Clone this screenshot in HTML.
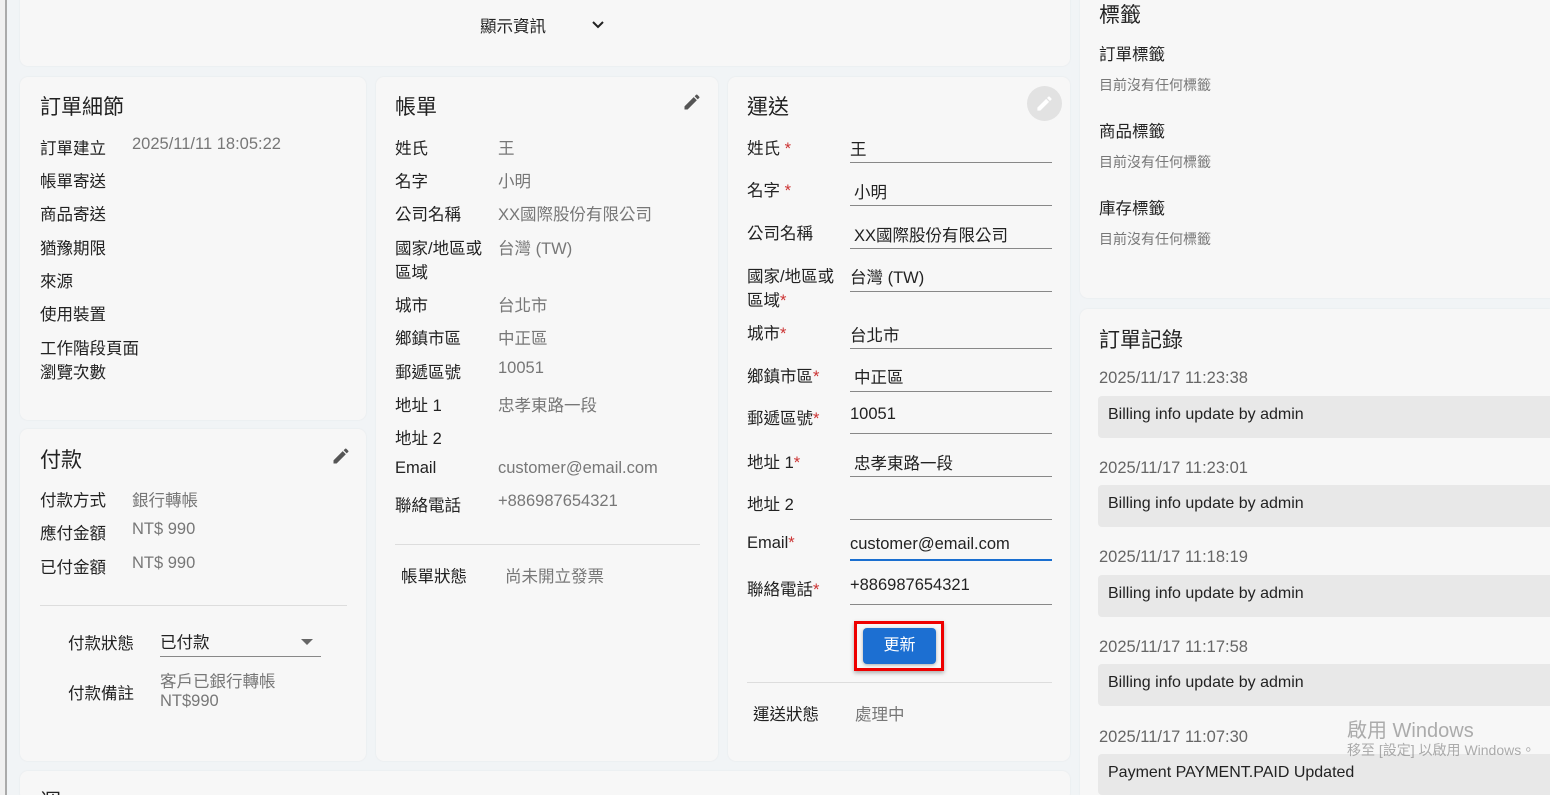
<!DOCTYPE html>
<html style="overflow:hidden;height:795px;width:1550px"><head><meta charset="utf-8"><style>
*{box-sizing:border-box;margin:0;padding:0}
body{width:1550px;height:795px;overflow:hidden;background:#f1f4f6;font-family:"Liberation Sans","Noto Sans CJK TC",sans-serif;color:#222;position:relative;font-size:16.5px}
.c{position:absolute;background:#f7f7f7;border-radius:8px;box-shadow:0 0 2px rgba(0,0,0,.06)}
.t{position:absolute;white-space:nowrap;margin-top:-2px}
.h{font-size:21px;color:#222;margin-top:-4px}
.g{color:#777}
.s{color:#777;font-size:14px}
.ln{position:absolute;height:1px;background:#888}
.hr{position:absolute;height:1px;background:#ddd}
.r{color:#c33}
.log{position:absolute;left:1098px;width:452px;height:42px;background:#e8e8e8;border-radius:4px 0 0 4px;padding:10px 10px;font-size:16px;color:#222}
.d{position:absolute;left:1099px;color:#666;font-size:16.5px}
</style></head><body>
<div style="position:absolute;left:5px;top:0;width:2px;height:795px;background:#aaa"></div>
<div style="position:absolute;left:0;top:0;width:5px;height:795px;background:#f0f0f0"></div>

<div class="c" style="left:20px;top:-8px;width:1050px;height:74px"></div>
<div class="t" style="left:480px;top:15px">顯示資訊</div>
<svg style="position:absolute;left:591px;top:19px" width="14" height="12" viewBox="0 0 14 12"><path d="M2 3l5 5 5-5" stroke="#222" stroke-width="2" fill="none"/></svg>

<div class="c" style="left:20px;top:77px;width:346px;height:343px"></div>
<div class="t h" style="left:40px;top:95px">訂單細節</div>
<div class="t" style="left:40px;top:137px">訂單建立</div><div class="t g" style="left:132px;top:137px">2025/11/11 18:05:22</div>
<div class="t" style="left:40px;top:170px">帳單寄送</div>
<div class="t" style="left:40px;top:203px">商品寄送</div>
<div class="t" style="left:40px;top:237px">猶豫期限</div>
<div class="t" style="left:40px;top:270px">來源</div>
<div class="t" style="left:40px;top:303px">使用裝置</div>
<div class="t" style="left:40px;top:337px">工作階段頁面</div>
<div class="t" style="left:40px;top:361px">瀏覽次數</div>

<div class="c" style="left:20px;top:429px;width:346px;height:332px"></div>
<div class="t h" style="left:40px;top:448px">付款</div>
<svg style="position:absolute;left:331px;top:446px" width="20" height="20" viewBox="0 0 24 24"><path d="M3 17.25V21h3.75L17.81 9.94l-3.75-3.75L3 17.25zM20.71 7.04a1 1 0 000-1.41l-2.34-2.34a1 1 0 00-1.41 0l-1.83 1.83 3.75 3.75 1.83-1.83z" fill="#555"/></svg>
<div class="t" style="left:40px;top:489px">付款方式</div><div class="t g" style="left:132px;top:489px">銀行轉帳</div>
<div class="t" style="left:40px;top:522px">應付金額</div><div class="t g" style="left:132px;top:522px">NT$ 990</div>
<div class="t" style="left:40px;top:556px">已付金額</div><div class="t g" style="left:132px;top:556px">NT$ 990</div>
<div class="hr" style="left:40px;top:605px;width:307px"></div>
<div class="t" style="left:68px;top:632px">付款狀態</div><div class="t" style="left:160px;top:631px">已付款</div>
<svg style="position:absolute;left:300px;top:638px" width="14" height="8"><path d="M1 1h12L7 7z" fill="#666"/></svg>
<div class="ln" style="left:160px;top:656px;width:161px"></div>
<div class="t" style="left:68px;top:682px">付款備註</div>
<div class="t g" style="left:160px;top:670px">客戶已銀行轉帳</div><div class="t g" style="left:160px;top:694px">NT$990</div>

<div class="c" style="left:376px;top:77px;width:342px;height:684px"></div>
<div class="t h" style="left:395px;top:95px">帳單</div>
<svg style="position:absolute;left:682px;top:92px" width="20" height="20" viewBox="0 0 24 24"><path d="M3 17.25V21h3.75L17.81 9.94l-3.75-3.75L3 17.25zM20.71 7.04a1 1 0 000-1.41l-2.34-2.34a1 1 0 00-1.41 0l-1.83 1.83 3.75 3.75 1.83-1.83z" fill="#555"/></svg>
<div class="t" style="left:395px;top:137px">姓氏</div><div class="t g" style="left:498px;top:137px">王</div>
<div class="t" style="left:395px;top:170px">名字</div><div class="t g" style="left:498px;top:170px">小明</div>
<div class="t" style="left:395px;top:203px">公司名稱</div><div class="t g" style="left:498px;top:203px">XX國際股份有限公司</div>
<div class="t" style="left:395px;top:237px">國家/地區或</div><div class="t g" style="left:498px;top:237px">台灣 (TW)</div>
<div class="t" style="left:395px;top:261px">區域</div>
<div class="t" style="left:395px;top:294px">城市</div><div class="t g" style="left:498px;top:294px">台北市</div>
<div class="t" style="left:395px;top:327px">鄉鎮市區</div><div class="t g" style="left:498px;top:327px">中正區</div>
<div class="t" style="left:395px;top:361px">郵遞區號</div><div class="t g" style="left:498px;top:361px">10051</div>
<div class="t" style="left:395px;top:394px">地址 1</div><div class="t g" style="left:498px;top:394px">忠孝東路一段</div>
<div class="t" style="left:395px;top:427px">地址 2</div>
<div class="t" style="left:395px;top:461px">Email</div><div class="t g" style="left:498px;top:461px">customer@email.com</div>
<div class="t" style="left:395px;top:494px">聯絡電話</div><div class="t g" style="left:498px;top:494px">+886987654321</div>
<div class="hr" style="left:395px;top:544px;width:305px"></div>
<div class="t" style="left:401px;top:565px">帳單狀態</div><div class="t g" style="left:505px;top:565px">尚未開立發票</div>

<div class="c" style="left:728px;top:77px;width:342px;height:684px"></div>
<div class="t h" style="left:747px;top:95px">運送</div>
<div style="position:absolute;left:1027px;top:86px;width:35px;height:35px;border-radius:50%;background:#e2e2e2"></div>
<svg style="position:absolute;left:1035px;top:94px" width="19" height="19" viewBox="0 0 24 24"><path d="M3 17.25V21h3.75L17.81 9.94l-3.75-3.75L3 17.25zM20.71 7.04a1 1 0 000-1.41l-2.34-2.34a1 1 0 00-1.41 0l-1.83 1.83 3.75 3.75 1.83-1.83z" fill="#fff"/></svg>
<div class="t" style="left:747px;top:137px">姓氏 <span class="r">*</span></div><div class="t" style="left:850px;top:138px">王</div><div class="ln" style="left:850px;top:162px;width:202px"></div>
<div class="t" style="left:747px;top:179px">名字 <span class="r">*</span></div><div class="t" style="left:854px;top:181px">小明</div><div class="ln" style="left:850px;top:205px;width:202px"></div>
<div class="t" style="left:747px;top:222px">公司名稱</div><div class="t" style="left:854px;top:224px">XX國際股份有限公司</div><div class="ln" style="left:850px;top:248px;width:202px"></div>
<div class="t" style="left:747px;top:265px">國家/地區或</div><div class="t" style="left:747px;top:289px">區域<span class="r">*</span></div><div class="t" style="left:850px;top:266px">台灣 (TW)</div><div class="ln" style="left:850px;top:291px;width:202px"></div>
<div class="t" style="left:747px;top:322px">城市<span class="r">*</span></div><div class="t" style="left:850px;top:324px">台北市</div><div class="ln" style="left:850px;top:348px;width:202px"></div>
<div class="t" style="left:747px;top:365px">鄉鎮市區<span class="r">*</span></div><div class="t" style="left:854px;top:366px">中正區</div><div class="ln" style="left:850px;top:391px;width:202px"></div>
<div class="t" style="left:747px;top:407px">郵遞區號<span class="r">*</span></div><div class="t" style="left:850px;top:407px">10051</div><div class="ln" style="left:850px;top:433px;width:202px"></div>
<div class="t" style="left:747px;top:451px">地址 1<span class="r">*</span></div><div class="t" style="left:854px;top:452px">忠孝東路一段</div><div class="ln" style="left:850px;top:476px;width:202px"></div>
<div class="t" style="left:747px;top:493px">地址 2</div><div class="ln" style="left:850px;top:519px;width:202px"></div>
<div class="t" style="left:747px;top:536px">Email<span class="r">*</span></div><div class="t" style="left:850px;top:537px">customer@email.com</div><div style="position:absolute;left:850px;top:559px;width:202px;height:2px;background:#1a6fd0"></div>
<div class="t" style="left:747px;top:578px">聯絡電話<span class="r">*</span></div><div class="t" style="left:850px;top:578px">+886987654321</div><div class="ln" style="left:850px;top:604px;width:202px"></div>
<div style="position:absolute;left:854px;top:621px;width:90px;height:50px;border:3px solid #e00;box-shadow:0 2px 4px rgba(0,0,0,.3)"></div>
<div style="position:absolute;left:863px;top:628px;width:73px;height:36px;background:#1c6fd2;border-radius:4px;color:#fff;text-align:center;line-height:36px;font-size:16px;box-shadow:0 1px 3px rgba(0,0,0,.3)">更新</div>
<div class="hr" style="left:747px;top:682px;width:305px"></div>
<div class="t" style="left:753px;top:703px">運送狀態</div><div class="t g" style="left:855px;top:703px">處理中</div>

<div class="c" style="left:20px;top:771px;width:1050px;height:30px"></div>
<div class="t h" style="left:40px;top:790px">運</div>

<div class="c" style="left:1080px;top:-8px;width:480px;height:306px"></div>
<div class="t h" style="left:1099px;top:3px">標籤</div>
<div class="t" style="left:1099px;top:43px">訂單標籤</div><div class="t s" style="left:1099px;top:77px">目前沒有任何標籤</div>
<div class="t" style="left:1099px;top:120px">商品標籤</div><div class="t s" style="left:1099px;top:154px">目前沒有任何標籤</div>
<div class="t" style="left:1099px;top:197px">庫存標籤</div><div class="t s" style="left:1099px;top:231px">目前沒有任何標籤</div>

<div class="c" style="left:1080px;top:309px;width:470px;height:486px;border-radius:8px 0 0 0"></div>
<div class="t h" style="left:1099px;top:328px">訂單記錄</div>
<div class="d" style="top:369px">2025/11/17 11:23:38</div><div class="log" style="top:396px">Billing info update by admin</div>
<div class="d" style="top:459px">2025/11/17 11:23:01</div><div class="log" style="top:485px">Billing info update by admin</div>
<div class="d" style="top:548px">2025/11/17 11:18:19</div><div class="log" style="top:575px">Billing info update by admin</div>
<div class="d" style="top:638px">2025/11/17 11:17:58</div><div class="log" style="top:664px">Billing info update by admin</div>
<div class="d" style="top:728px">2025/11/17 11:07:30</div><div class="log" style="top:754px;height:41px">Payment PAYMENT.PAID Updated</div>
<div class="t" style="left:1347px;top:716px;font-size:20px;color:rgba(120,120,120,.6)">啟用 Windows</div>
<div class="t" style="left:1347px;top:742px;font-size:14px;color:rgba(120,120,120,.6)">移至 [設定] 以啟用 Windows。</div>
</body></html>
